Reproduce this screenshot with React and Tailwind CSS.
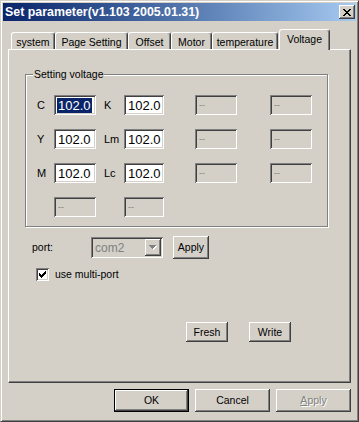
import React from "react";

const raised =
  "shadow-[inset_-1px_-1px_#404040,inset_1px_1px_#ffffff,inset_-2px_-2px_#808080]";
const sunken =
  "shadow-[inset_1px_1px_#808080,inset_-1px_-1px_#ffffff,inset_2px_2px_#404040,inset_-2px_-2px_#d4d0c8]";

function CloseGlyph() {
  // 8x7 pixel X, like the classic caption button
  const rows = [
    "XX....XX",
    ".XX..XX.",
    "..XXXX..",
    "...XX...",
    "..XXXX..",
    ".XX..XX.",
    "XX....XX",
  ];
  return (
    <svg width="8" height="7" viewBox="0 0 8 7" shapeRendering="crispEdges">
      {rows.map((r, y) =>
        r.split("").map((c, x) =>
          c === "X" ? <rect key={`${x}-${y}`} x={x} y={y} width="1" height="1" fill="#000" /> : null
        )
      )}
    </svg>
  );
}

function CheckGlyph() {
  const rows = ["......X", ".....XX", "X...XXX", "XX.XXX.", "XXXXX..", ".XXX...", "..X...."];
  return (
    <svg width="7" height="7" viewBox="0 0 7 7" shapeRendering="crispEdges">
      {rows.map((r, y) =>
        r.split("").map((c, x) =>
          c === "X" ? <rect key={`${x}-${y}`} x={x} y={y} width="1" height="1" fill="#000" /> : null
        )
      )}
    </svg>
  );
}

function Field({ value, selected }) {
  return (
    <div className={`h-[20px] bg-white ${sunken} flex items-center pl-[3px] text-[13px] leading-none`}>
      <span className={selected ? "bg-[#0a246a] text-white px-[1px] py-[1px]" : "px-[1px]"}>{value}</span>
    </div>
  );
}

function DisabledField() {
  return (
    <div className={`h-[20px] bg-[#d4d0c8] ${sunken} flex items-center pl-[4px] text-[9px] leading-none text-[#808080]`}>
      --
    </div>
  );
}

function Label({ children, pad }) {
  return <div className={`text-[11px] leading-none ${pad ? "pl-[8px]" : ""}`}>{children}</div>;
}

function Button({ children, className = "" }) {
  return (
    <div className={`flex items-center justify-center bg-[#d4d0c8] ${raised} text-[10.5px] leading-none ${className}`}>
      {children}
    </div>
  );
}

function Tab({ label, width, active }) {
  if (active) {
    return (
      <div
        className={`${width} h-[21px] mb-[-1px] relative z-10 bg-[#d4d0c8] rounded-t-[3px] border-l border-t border-r border-l-white border-t-white border-r-[#404040] shadow-[inset_-1px_0_#808080] flex justify-center pt-[2px] text-[10.5px]`}
      >
        {label}
      </div>
    );
  }
  return (
    <div
      className={`${width} h-[17px] bg-[#d4d0c8] rounded-t-[3px] border-l border-t border-r border-l-white border-t-white border-r-[#404040] shadow-[inset_-1px_0_#808080] flex justify-center pt-[2px] text-[10.5px]`}
    >
      {label}
    </div>
  );
}

export default function App() {
  return (
    <div className="w-[359px] h-[422px] bg-[#d4d0c8] text-black font-['Liberation_Sans',Arial,sans-serif] border border-t-[#d4d0c8] border-l-[#d4d0c8] border-r-[#404040] border-b-[#404040] shadow-[inset_1px_1px_#ffffff,inset_-1px_-1px_#808080] p-[2px] flex flex-col select-none">
      {/* title bar */}
      <div className="h-[18px] bg-linear-to-r from-[#0a246a] to-[#a6caf0] flex items-center justify-between pl-[2px] pr-[1px]">
        <span className="text-white font-bold text-[12.4px] leading-none">Set parameter(v1.103 2005.01.31)</span>
        <div className={`w-[16px] h-[14px] bg-[#d4d0c8] ${raised} flex items-center justify-center pr-[1px]`}>
          <CloseGlyph />
        </div>
      </div>

      {/* tabs */}
      <div className="h-[28px] flex items-end pl-[8px]">
        <Tab label="system" width="w-[44px]" />
        <Tab label="Page Setting" width="w-[73px]" />
        <Tab label="Offset" width="w-[43px]" />
        <Tab label="Motor" width="w-[41px]" />
        <Tab label="temperature" width="w-[66px]" />
        <div className="ml-[1px]">
          <Tab label="Voltage" width="w-[51px]" active />
        </div>
      </div>

      {/* tab panel */}
      <div className="ml-[5px] w-[343px] h-[334px] border border-l-white border-t-white border-r-[#404040] border-b-[#404040] shadow-[inset_-1px_-1px_#808080] flex flex-col">
        <div className="ml-[16px] mt-[24px] w-[303px] h-[153px] border border-[#808080] shadow-[inset_1px_1px_#ffffff,1px_1px_#ffffff] flex flex-col">
          <div className="self-start ml-[7px] -mt-[7px] px-[1px] bg-[#d4d0c8] text-[10.5px] leading-[13px]">Setting voltage</div>
          <div className="mt-[14px] pl-[11px] grid grid-cols-[17px_42px_28px_40px_31px_42px_33px_42px] grid-rows-[20px_20px_20px_20px] gap-y-[14px] items-center">
            <Label>C</Label>
            <Field value="102.0" selected />
            <Label pad>K</Label>
            <Field value="102.0" />
            <div />
            <DisabledField />
            <div />
            <DisabledField />

            <Label>Y</Label>
            <Field value="102.0" />
            <Label pad>Lm</Label>
            <Field value="102.0" />
            <div />
            <DisabledField />
            <div />
            <DisabledField />

            <Label>M</Label>
            <Field value="102.0" />
            <Label pad>Lc</Label>
            <Field value="102.0" />
            <div />
            <DisabledField />
            <div />
            <DisabledField />

            <div />
            <DisabledField />
            <div />
            <DisabledField />
          </div>
        </div>

        {/* port row */}
        <div className="mt-[9px] ml-[23px] h-[23px] flex items-center">
          <span className="w-[59px] text-[10.5px]">port:</span>
          <div className={`w-[72px] h-[21px] bg-[#d4d0c8] ${sunken} flex items-center justify-between pl-[4px] pr-[2px]`}>
            <span className="text-[12px] leading-none text-[#808080]">com2</span>
            <div className={`w-[16px] h-[17px] bg-[#d4d0c8] ${raised} flex items-center justify-center`}>
              <svg width="8" height="5" viewBox="0 0 8 5" shapeRendering="crispEdges">
                <path d="M1 1h7l-3.5 4z" fill="#ffffff" />
                <path d="M0 0h7l-3.5 4z" fill="#808080" />
              </svg>
            </div>
          </div>
          <Button className="ml-[10px] w-[36px] h-[23px]">Apply</Button>
        </div>

        {/* multi-port */}
        <div className="mt-[9px] ml-[27px] flex items-center">
          <div className={`w-[13px] h-[13px] bg-white ${sunken} flex items-center justify-center`}>
            <CheckGlyph />
          </div>
          <span className="ml-[6px] text-[10.5px] leading-none">use multi-port</span>
        </div>

        {/* fresh / write */}
        <div className="mt-[41px] ml-[177px] flex gap-[21px]">
          <Button className="w-[42px] h-[20px]">Fresh</Button>
          <Button className="w-[42px] h-[20px]">Write</Button>
        </div>
      </div>

      {/* dialog buttons */}
      <div className="mt-[6px] mr-[5px] flex justify-end gap-[6px]">
        <div className="w-[75px] h-[23px] border border-black bg-[#d4d0c8] shadow-[inset_-1px_-1px_#404040,inset_1px_1px_#ffffff,inset_-2px_-2px_#808080] flex items-center justify-center text-[10.5px] leading-none">
          OK
        </div>
        <Button className="w-[75px] h-[23px]">Cancel</Button>
        <Button className="w-[75px] h-[23px] text-[#808080] [text-shadow:1px_1px_#ffffff]">
          <span>
            <span className="underline">A</span>pply
          </span>
        </Button>
      </div>
    </div>
  );
}
